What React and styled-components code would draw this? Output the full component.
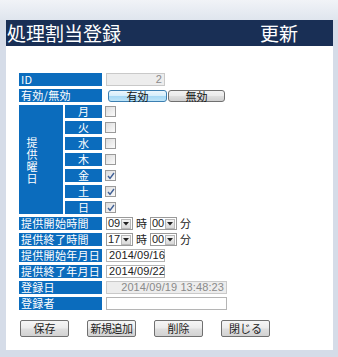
import React from "react";
import styled, { createGlobalStyle, css } from "styled-components";

const Global = createGlobalStyle`
  html, body { margin: 0; padding: 0; }
  body {
    width: 338px;
    height: 357px;
    overflow: hidden;
    background: #d5dce8;
    font-family: "Noto Sans CJK JP", "Liberation Sans", sans-serif;
  }
`;

const Page = styled.div`
  width: 338px;
  height: 357px;
  display: flex;
  flex-direction: column;
  background: #d5dce8;
`;

const TopStrip = styled.div`
  height: 20px;
  background: linear-gradient(#f1f3f7, #dfe5ee);
`;

const Panel = styled.div`
  margin: 0 5px 0 6px;
  background: #fff;
  display: flex;
  flex-direction: column;
`;

const TitleBar = styled.div`
  height: 26px;
  background: #192f55;
  color: #fff;
  display: flex;
  align-items: center;
  justify-content: space-between;
  padding: 0 35px 0 1px;
  font-size: 19px;
  line-height: 26px;
  font-weight: 400;
`;

const Content = styled.div`
  padding: 27px 0 13px 13px;
  display: flex;
  flex-direction: column;
`;

const Form = styled.div`
  display: grid;
  grid-template-columns: 44px 37px auto;
  grid-auto-rows: 13px;
  column-gap: 2px;
  row-gap: 3px;
`;

const Label = styled.div`
  background: #0b6cbd;
  color: #fff;
  font-size: 11px;
  line-height: 13px;
  padding-left: 2px;
  white-space: nowrap;
  ${(p) =>
    p.$wide &&
    css`
      grid-column: 1 / 3;
      letter-spacing: 0.3px;
    `}
  ${(p) =>
    p.$center &&
    css`
      text-align: center;
      padding-left: 0;
    `}
`;

const GroupLabel = styled.div`
  grid-column: 1;
  grid-row: span 7;
  background: #0b6cbd;
  color: #fff;
  font-size: 11px;
  line-height: 12px;
  display: flex;
  align-items: center;
  padding-left: 7px;
`;

const Vertical = styled.div`
  width: 12px;
  word-break: break-all;
  text-align: center;
`;

const Cell = styled.div`
  grid-column: 3;
  display: flex;
  align-items: center;
  gap: 2px;
  padding-left: ${(p) => p.$pad ?? 2}px;
  font-size: 11px;
  color: #222;
`;

const TextBox = styled.div`
  box-sizing: border-box;
  width: ${(p) => p.$w}px;
  height: 13px;
  border: 1px solid ${(p) => (p.$disabled ? "#c9c9c9" : "#b5b5b5")};
  background: ${(p) => (p.$disabled ? "#ededed" : "#fff")};
  color: ${(p) => (p.$disabled ? "#8a8a8a" : "#222")};
  font-family: "Liberation Sans", Arial, sans-serif;
  font-size: 11px;
  line-height: 11px;
  padding: 0 2px;
  text-align: ${(p) => (p.$right ? "right" : "left")};
  letter-spacing: 0.1px;
  white-space: nowrap;
`;

const Toggle = styled.div`
  box-sizing: border-box;
  width: ${(p) => p.$w}px;
  height: 12px;
  border-radius: 3px;
  font-size: 11px;
  line-height: 10px;
  text-align: center;
  color: #111;
  ${(p) =>
    p.$on
      ? css`
          border: 1px solid #3c7fb1;
          background: linear-gradient(#eaf6fd 0%, #d7effc 45%, #a7d9f5 55%, #bde4f8 100%);
        `
      : css`
          border: 1px solid #707070;
          background: linear-gradient(#f2f2f2 0%, #ebebeb 45%, #dddddd 55%, #cfcfcf 100%);
        `}
`;

const ToggleGroup = styled.div`
  display: flex;
  gap: 1px;
  padding-left: 1px;
`;

const Check = styled.span`
  box-sizing: border-box;
  width: 11px;
  height: 11px;
  border: 1px solid #9a9a9a;
  background: linear-gradient(135deg, #dcdcdc, #fbfbfb);
  display: flex;
  align-items: center;
  justify-content: center;
`;

const SelectBox = styled.div`
  box-sizing: border-box;
  width: 27px;
  height: 13px;
  border: 1px solid #9a9a9a;
  background: #fff;
  display: flex;
  align-items: center;
  justify-content: space-between;
  font-family: "Liberation Sans", Arial, sans-serif;
  font-size: 11px;
  line-height: 11px;
  padding-left: 1px;
`;

const Arrow = styled.span`
  box-sizing: border-box;
  width: 10px;
  height: 10px;
  margin-right: 1px;
  border: 1px solid #b8b8b8;
  background: linear-gradient(#f4f4f4, #d8d8d8);
  display: flex;
  align-items: center;
  justify-content: center;
`;

const Unit = styled.span`
  font-size: 11px;
  line-height: 13px;
  color: #222;
  margin: 0 1px;
`;

const ButtonRow = styled.div`
  display: flex;
  gap: 18px;
  margin-top: 10px;
  padding-left: 1px;
`;

const Button = styled.div`
  box-sizing: border-box;
  width: 49px;
  height: 17px;
  border: 1px solid #707070;
  border-radius: 2px;
  background: linear-gradient(#f6f6f6 0%, #ececec 45%, #dedede 55%, #d2d2d2 100%);
  font-size: 11px;
  line-height: 15px;
  text-align: center;
  color: #222;
  white-space: nowrap;
  ${(p) => p.$tight && css`letter-spacing: -0.5px;`}
`;

function CheckBox({ checked }) {
  return (
    <Check>
      {checked && (
        <svg width="8" height="8" viewBox="0 0 8 8">
          <path d="M1 4 L3 6.3 L7 1" fill="none" stroke="#3f5f95" strokeWidth="1.4" />
        </svg>
      )}
    </Check>
  );
}

function Select({ value }) {
  return (
    <SelectBox>
      <span>{value}</span>
      <Arrow>
        <svg width="6" height="4" viewBox="0 0 6 4">
          <path d="M0 0 L6 0 L3 3.5 Z" fill="#222" />
        </svg>
      </Arrow>
    </SelectBox>
  );
}

const days = [
  ["月", false],
  ["火", false],
  ["水", false],
  ["木", false],
  ["金", true],
  ["土", true],
  ["日", true],
];

export default function App() {
  return (
    <>
      <Global />
      <Page>
        <TopStrip />
        <Panel>
          <TitleBar>
            <span>処理割当登録</span>
            <span>更新</span>
          </TitleBar>
          <Content>
            <Form>
              <Label $wide>ID</Label>
              <Cell>
                <TextBox $w={59} $disabled $right>2</TextBox>
              </Cell>

              <Label $wide>有効/無効</Label>
              <Cell $pad={3}>
                <ToggleGroup>
                  <Toggle $w={59} $on>有効</Toggle>
                  <Toggle $w={57}>無効</Toggle>
                </ToggleGroup>
              </Cell>

              <GroupLabel>
                <Vertical>提供曜日</Vertical>
              </GroupLabel>
              {days.map(([d, c], i) => (
                <React.Fragment key={d}>
                  <Label $center style={{ gridColumn: 2, gridRow: i + 3 }}>
                    {d}
                  </Label>
                  <Cell $pad={1} style={{ gridRow: i + 3 }}>
                    <CheckBox checked={c} />
                  </Cell>
                </React.Fragment>
              ))}

              <Label $wide>提供開始時間</Label>
              <Cell>
                <Select value="09" />
                <Unit>時</Unit>
                <Select value="00" />
                <Unit>分</Unit>
              </Cell>

              <Label $wide>提供終了時間</Label>
              <Cell>
                <Select value="17" />
                <Unit>時</Unit>
                <Select value="00" />
                <Unit>分</Unit>
              </Cell>

              <Label $wide>提供開始年月日</Label>
              <Cell>
                <TextBox $w={59}>2014/09/16</TextBox>
              </Cell>

              <Label $wide>提供終了年月日</Label>
              <Cell>
                <TextBox $w={59}>2014/09/22</TextBox>
              </Cell>

              <Label $wide>登録日</Label>
              <Cell>
                <TextBox $w={121} $disabled $right>2014/09/19 13:48:23</TextBox>
              </Cell>

              <Label $wide>登録者</Label>
              <Cell>
                <TextBox $w={121} />
              </Cell>
            </Form>
            <ButtonRow>
              <Button>保存</Button>
              <Button $tight>新規追加</Button>
              <Button>削除</Button>
              <Button>閉じる</Button>
            </ButtonRow>
          </Content>
        </Panel>
      </Page>
    </>
  );
}
